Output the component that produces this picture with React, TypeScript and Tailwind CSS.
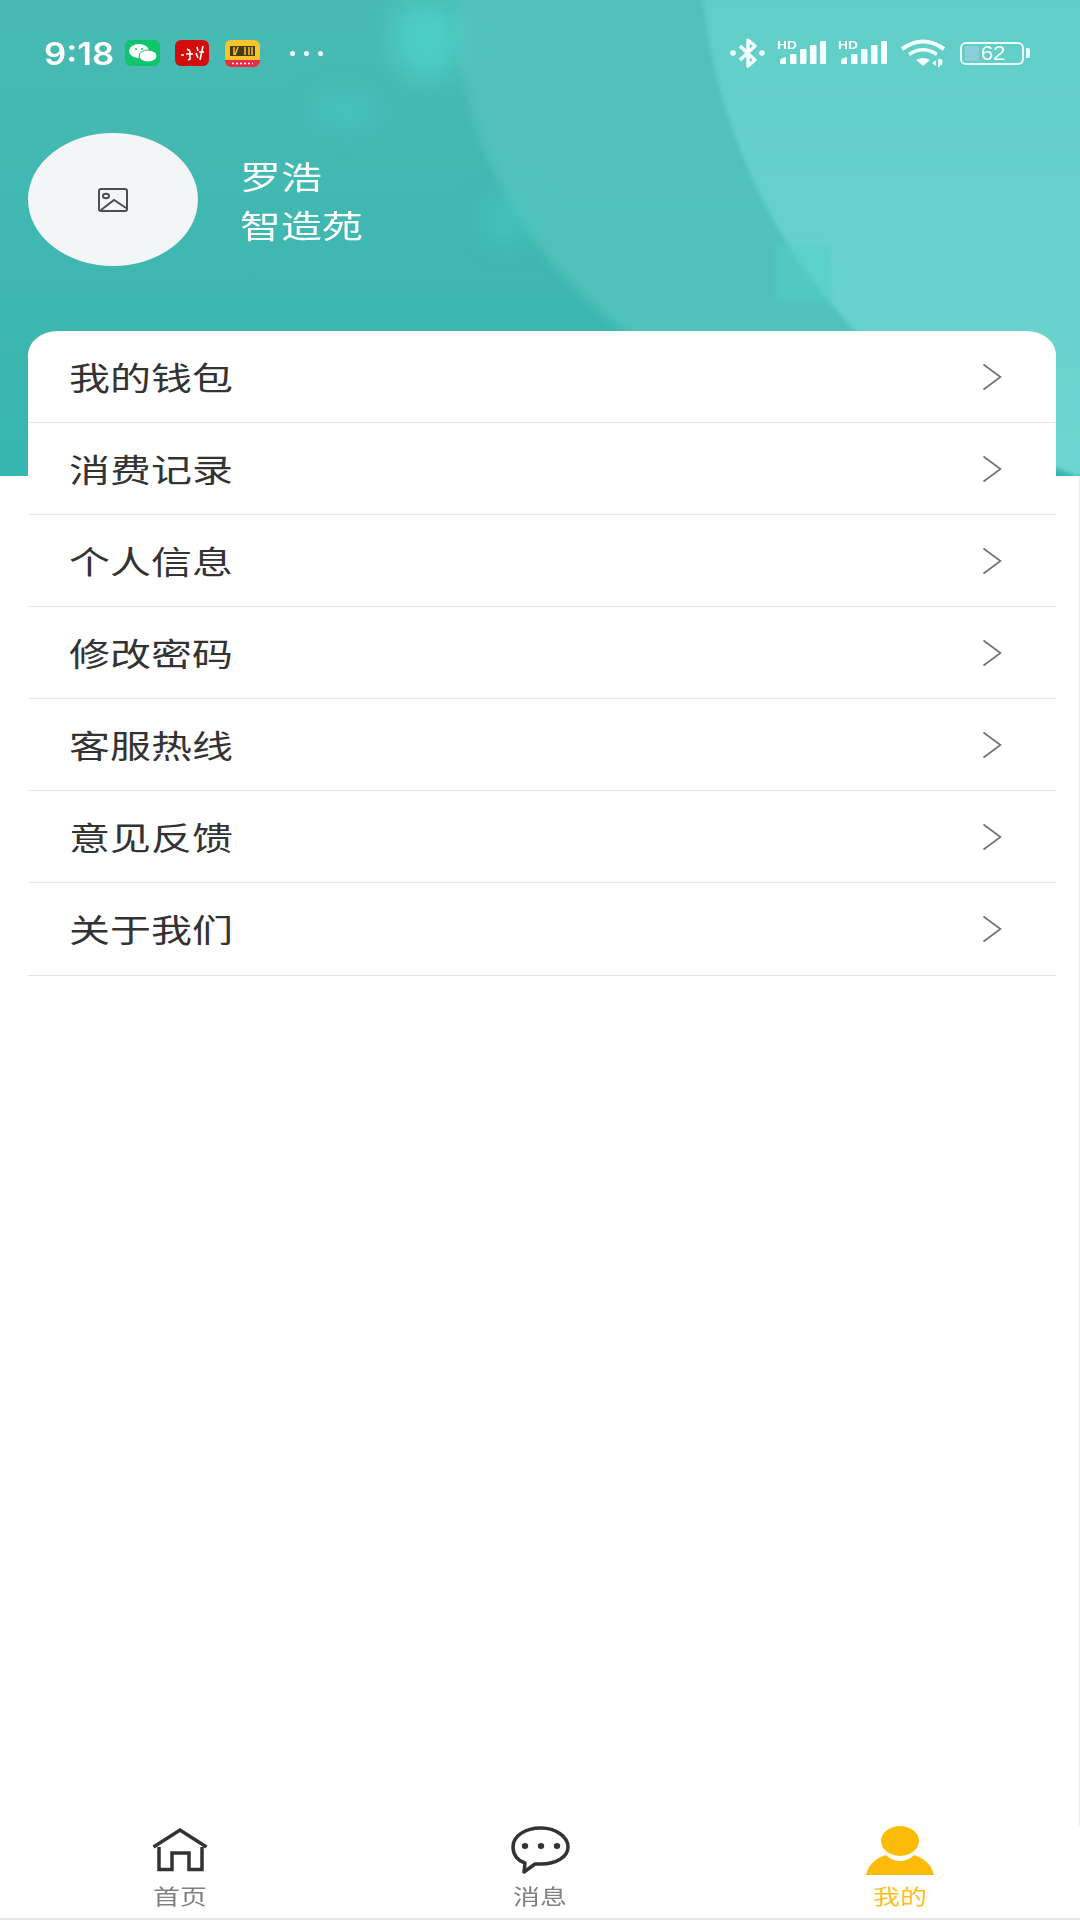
import React from 'react';

const menu = ['我的钱包', '消费记录', '个人信息', '修改密码', '客服热线', '意见反馈', '关于我们'];

const cjk = 'font-["Noto_Sans_CJK_SC","Noto_Sans",sans-serif]';

function Signal() {
  return (
    <div className="relative w-[49px] h-[24px]">
      <span className="absolute left-0 top-[-1px] text-[11px] leading-[10px] font-bold text-white scale-x-[1.25] origin-left font-['Liberation_Sans',sans-serif]">HD</span>
      <svg width="49" height="24" viewBox="0 0 49 24" fill="#f2fffd">
        <path d="M3 23v-3q0-3 6-4v7z" />
        <rect x="13" y="13" width="6.500" height="10" rx="1" />
        <rect x="23" y="8" width="6.500" height="15" rx="1" />
        <rect x="33" y="4" width="6.500" height="19" rx="1" />
        <rect x="43" y="0" width="6" height="23" rx="1" />
      </svg>
    </div>
  );
}

function StatusBar() {
  return (
    <div className="relative flex items-center h-[106px] pl-[44px] pr-[50px] text-white">
      <span className="w-[81px] text-[31px] font-semibold leading-none scale-x-[1.12] origin-left font-['Inter',sans-serif]">9:18</span>
      <svg width="35" height="26" viewBox="0 0 35 26">
        <rect width="35" height="26" rx="6" fill="#10c46c" />
        <ellipse cx="14" cy="11" rx="10" ry="7" fill="#fff" />
        <ellipse cx="23" cy="16" rx="9" ry="6" fill="#fff" stroke="#10c46c" />
        <circle cx="11" cy="9" r="1" fill="#10c46c" />
        <circle cx="17" cy="9" r="1" fill="#10c46c" />
      </svg>
      <svg className="ml-[15px]" width="34" height="26" viewBox="0 0 34 26">
        <rect width="34" height="26" rx="6" fill="#d40c0c" />
        <path d="M6 15h3M12 9l3 2M11 14h7M15 11v9M13 20l2-1M22 7l1 4M21 13l2 5M28 6l-3 14M24 12h5" stroke="#fff" strokeWidth="1.600" fill="none" />
      </svg>
      <svg className="ml-[16px]" width="35" height="27" viewBox="0 0 35 27">
        <rect width="35" height="27" rx="6" fill="#f6c52b" />
        <path d="M0 20h35v1a6 6 0 0 1-6 6H6a6 6 0 0 1-6-6z" fill="#ee2b45" />
        <rect x="5" y="6" width="25" height="10" fill="#4a3a14" />
        <path d="M9 7v8M13 7l-3 8M20 7v8M24 7v8M27 7v8" stroke="#f6c52b" strokeWidth="1.500" />
        <path d="M7 23.500h21" stroke="#fff" strokeWidth="1.500" strokeDasharray="2 2" />
      </svg>
      <div className="flex gap-[9px] ml-[30px]">
        <span className="w-[5px] h-[5px] rounded-full bg-[#f2fffd]" />
        <span className="w-[5px] h-[5px] rounded-full bg-[#f2fffd]" />
        <span className="w-[5px] h-[5px] rounded-full bg-[#f2fffd]" />
      </div>
      <div className="flex items-center ml-auto">
        <svg width="36" height="32" viewBox="0 0 36 32" fill="none">
          <path d="M10 9l15 14-7 6V3l7 6-15 14" stroke="#f2fffd" strokeWidth="3.500" strokeLinejoin="round" />
          <circle cx="3" cy="16" r="2.800" fill="#f2fffd" />
          <circle cx="32" cy="16" r="2.800" fill="#f2fffd" />
        </svg>
        <div className="ml-[11px]"><Signal /></div>
        <div className="ml-[12px]"><Signal /></div>
        <svg className="ml-[13px]" width="47" height="28" viewBox="0 0 47 28" fill="none">
          <path d="M2 10Q23-5 44 10" stroke="#f2fffd" strokeWidth="4" />
          <path d="M9 15.500Q23 6 37 15.500" stroke="#f2fffd" strokeWidth="3.500" />
          <path d="M16 21Q23 17 30 21L23 27z" fill="#f2fffd" />
          <path d="M36 21l-4 3 4 3zM38 20h2.500q2 0 2 3t-2 3H40v2h-2z" fill="#f2fffd" />
        </svg>
        <div className="ml-[13px] flex items-center">
          <div className="relative flex items-center justify-center w-[64px] h-[23px] rounded-[6px] border-2 border-[#ecfffc] overflow-hidden">
            <span className="absolute left-[3px] top-[2px] bottom-[2px] w-[14px] bg-[#8ccfd8]" />
            <span className="relative left-[1px] text-[20px] leading-none text-white scale-x-[1.12] font-['Liberation_Sans',sans-serif]">62</span>
          </div>
          <span className="ml-[2px] w-[4px] h-[10px] rounded-r-[2px] bg-[#ecfffc]" />
        </div>
      </div>
    </div>
  );
}

function Header() {
  return (
    <div className="relative h-[476px] shrink-0 overflow-hidden bg-gradient-to-b from-[#48bab3] to-[#36b6af]">
      {/* background art */}
      <div className="absolute left-[456px] top-[-407px] w-[814px] h-[814px] rounded-full bg-gradient-to-b from-[#54bfb8] to-[#50c2bb] blur-[5px]" />
      <div className="absolute left-[700px] top-[-630px] w-[1140px] h-[1140px] rounded-full bg-gradient-to-b from-[#5acbc4] via-[#5fcdc6] to-[#6dd6d0] blur-[2px]" />
      <div className="absolute left-[392px] top-[0px] w-[70px] h-[80px] rounded-full bg-[#4fd6cc]/70 blur-[14px]" />
      <div className="absolute left-[310px] top-[92px] w-[70px] h-[38px] rounded-full bg-[#48ccc4]/50 blur-[12px]" />
      <div className="absolute left-[480px] top-[195px] w-[50px] h-[50px] rounded-full bg-[#48ccc4]/50 blur-[12px]" />
      <div className="absolute left-[776px] top-[245px] w-[55px] h-[55px] bg-[#52cfc7]/50 blur-[3px]" />

      <StatusBar />
      <div className="relative flex items-center pt-[27px] pl-[28px]">
        <div className="flex items-center justify-center w-[170px] h-[133px] rounded-[50%] bg-[#f4f5f6]">
          <svg width="30" height="24" viewBox="0 0 30 24" fill="none" stroke="#4b4d50" strokeWidth="2">
            <rect x="1" y="1" width="28" height="22" rx="2" />
            <ellipse cx="8" cy="8" rx="3" ry="2.300" />
            <path d="M3 22l13-10 12 8" />
          </svg>
        </div>
        <div className={`ml-[42px] text-white text-[32px] leading-[49px] ${cjk}`}>
          <div className="scale-x-[1.28] origin-left">罗浩</div>
          <div className="scale-x-[1.28] origin-left">智造苑</div>
        </div>
      </div>
    </div>
  );
}

function TabBar() {
  return (
    <div className={`grid grid-cols-3 h-[94px] shrink-0 border-b-2 border-[#e6e6e6] text-[21px] leading-[26px] ${cjk}`}>
      <div className="flex flex-col items-center text-[#808080]">
        <svg className="h-[50px]" width="56" height="50" viewBox="0 0 56 50" fill="none" stroke="#333" strokeWidth="3.500">
          <path d="M1.500 21L28 4l26.500 17" />
          <path d="M7 21v22.500h13V27h17v16.500h13V21" />
        </svg>
        <span className="mt-[6px] scale-x-[1.28]">首页</span>
      </div>
      <div className="flex flex-col items-center text-[#808080]">
        <svg className="h-[50px]" width="60" height="50" viewBox="0 0 60 50" fill="none">
          <path d="M31 2C15 2 3 10 3 21c0 8 5 14 12 16l-1 9 11-8h6c15 0 27-7 27-17S46 2 31 2z" stroke="#333" strokeWidth="3.500" strokeLinejoin="round" />
          <ellipse cx="15" cy="20" rx="3.200" ry="3" fill="#333" />
          <ellipse cx="31" cy="20" rx="3.200" ry="3" fill="#333" />
          <ellipse cx="47" cy="20" rx="3.200" ry="3" fill="#333" />
        </svg>
        <span className="mt-[6px] scale-x-[1.28]">消息</span>
      </div>
      <div className="flex flex-col items-center text-[#fdc020]">
        <svg className="h-[50px]" width="68" height="50" viewBox="0 0 68 50" fill="#fdbb09">
          <ellipse cx="34" cy="15" rx="19" ry="15" />
          <path d="M0 49C2 39 10 32 20 29c4 4 9 6 14 6s10-2 14-6c10 3 18 10 20 20z" />
        </svg>
        <span className="mt-[6px] scale-x-[1.28]">我的</span>
      </div>
    </div>
  );
}

export default function App() {
  return (
    <div className="flex flex-col w-[1080px] h-[1920px] bg-white overflow-hidden">
      <Header />
      <div className="flex-1 border-r border-[#eeeeee]">
        <div className={`relative -mt-[145px] mx-[28px] w-[1028px] rounded-tl-[30px_24px] rounded-tr-[30px_24px] bg-white ${cjk}`}>
          {menu.map((label, i) => (
            <div
              key={label}
              className={`flex items-center justify-between pl-[41px] pr-[54px] border-b ${i === menu.length - 1 ? 'h-[93px] border-[#e2e2e2]' : 'h-[92px] border-[#e9e9e9]'}`}
            >
              <span className="text-[32px] text-[#333] scale-x-[1.28] origin-left -translate-y-px">{label}</span>
              <svg width="20" height="28" viewBox="0 0 20 28" fill="none" stroke="#707070" strokeWidth="1.600">
                <path d="M1.500 1.500L18.500 14L1.500 26.500" />
              </svg>
            </div>
          ))}
        </div>
      </div>
      <TabBar />
    </div>
  );
}
